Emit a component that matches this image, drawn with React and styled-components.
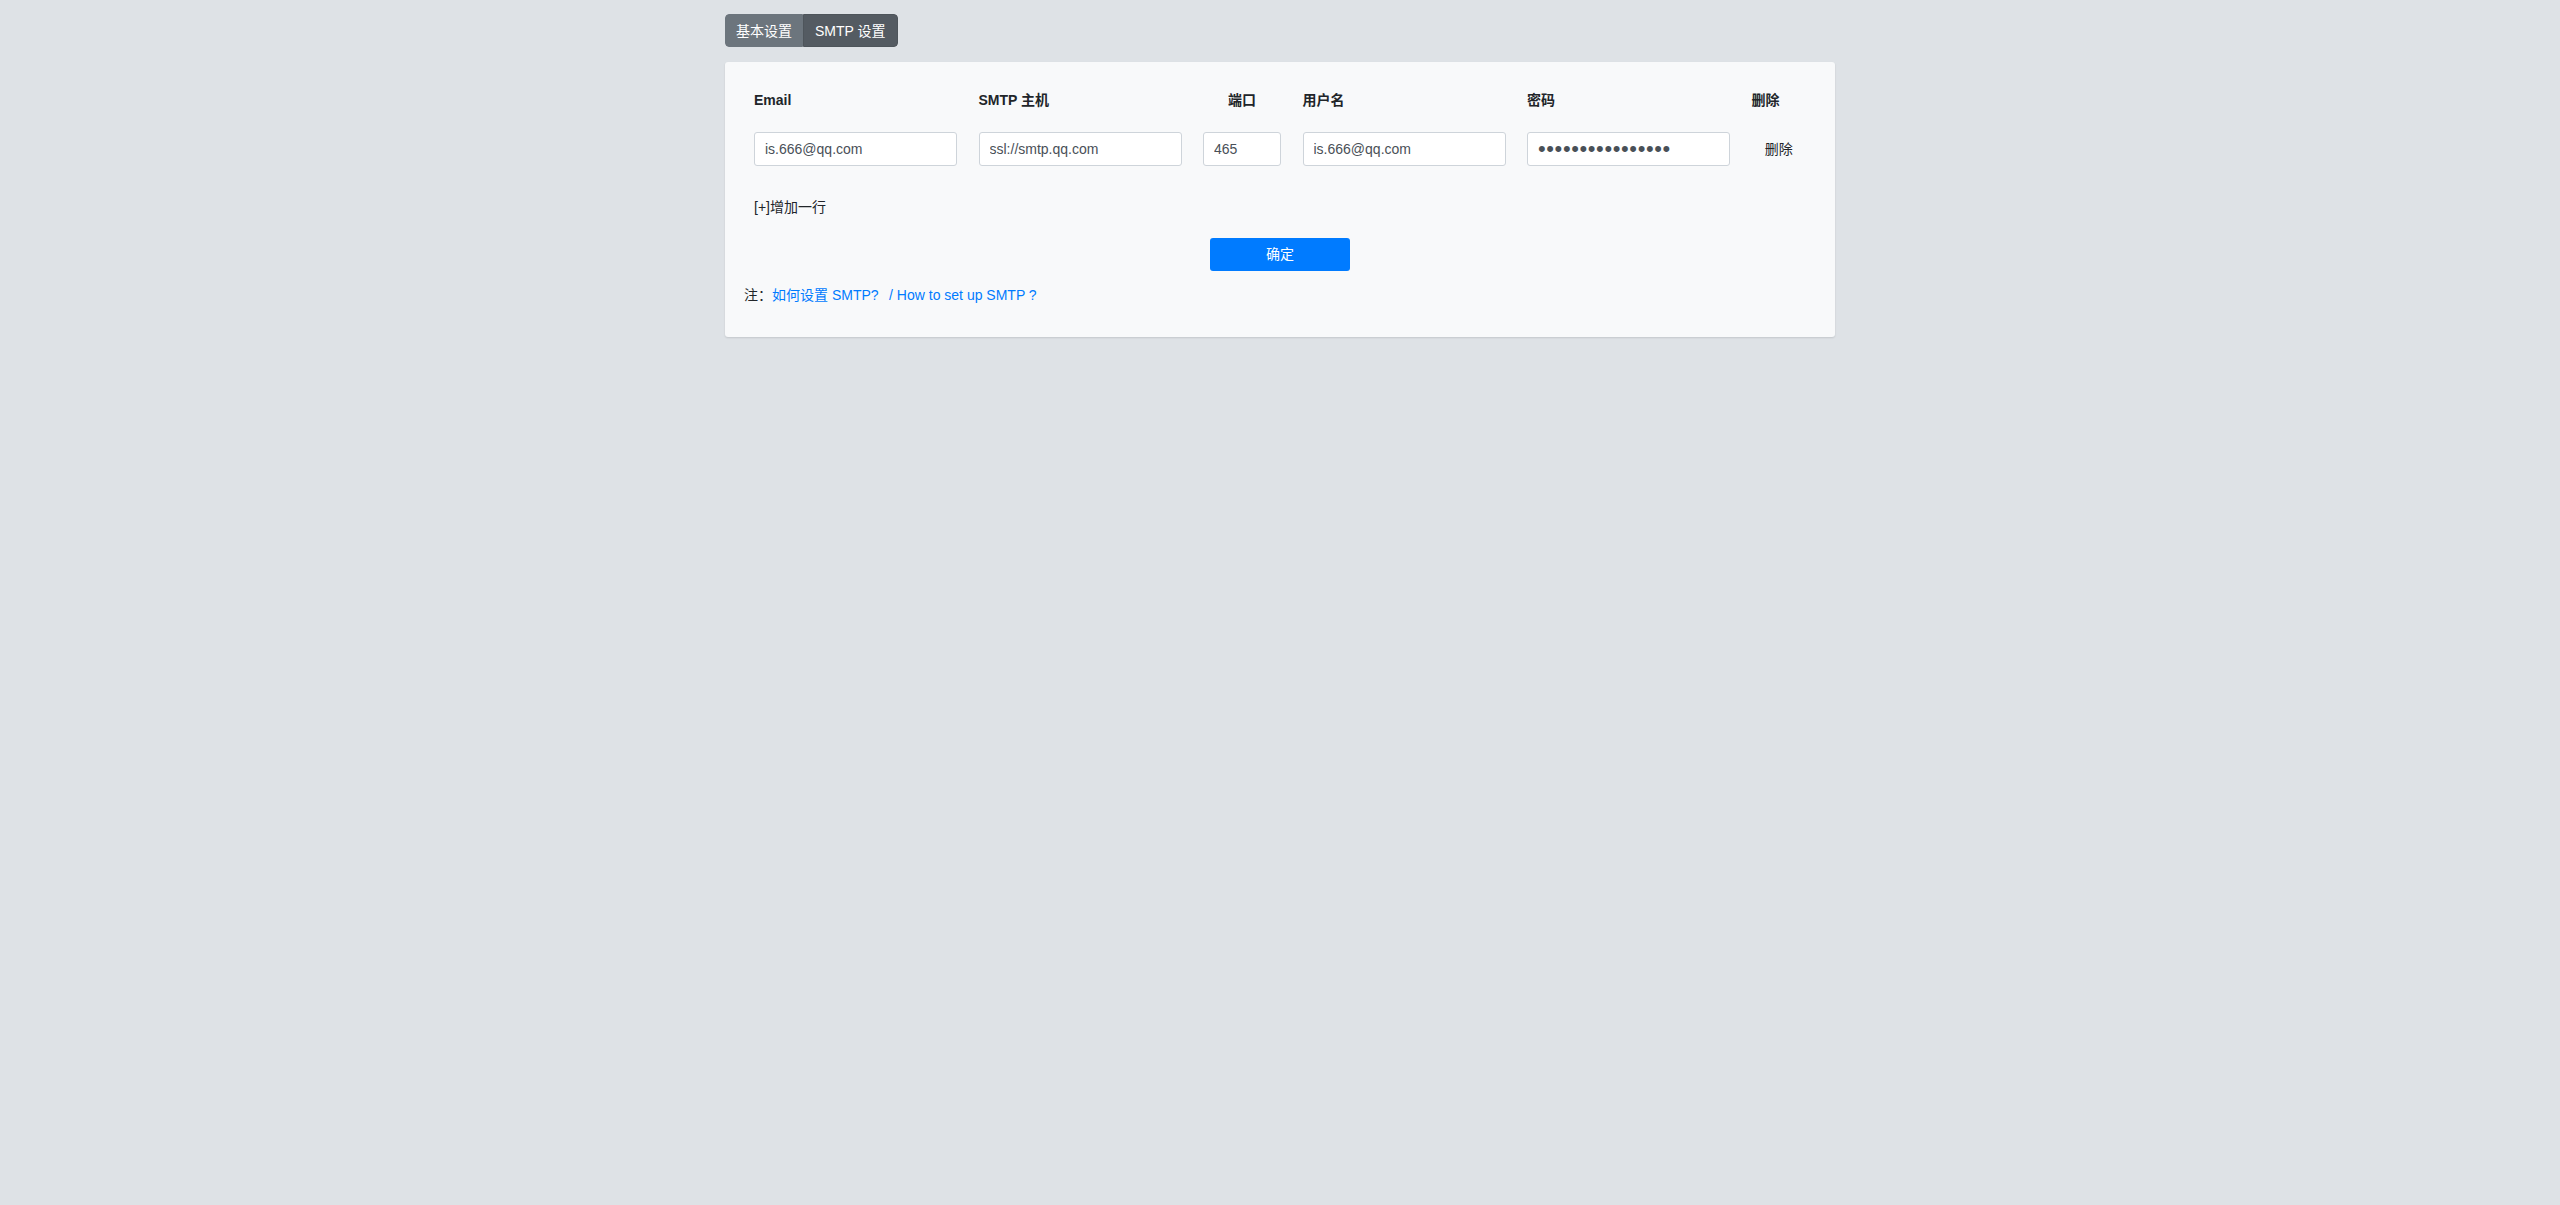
import React from "react";
import styled, { createGlobalStyle } from "styled-components";

const Global = createGlobalStyle`
  html, body { margin: 0; padding: 0; background: #dee2e6; }
  body {
    font-family: "Liberation Sans", Arial, "Noto Sans CJK SC", sans-serif;
    font-size: 14px;
    line-height: 1.5;
    color: #212529;
    min-height: 1205px;
  }
  * { box-sizing: border-box; }
`;

const Container = styled.div`
  width: 1110px;
  margin: 0 auto;
  padding-top: 14px;
  display: flex;
  flex-direction: column;
  align-items: flex-start;
  gap: 15px;
`;

const TabGroup = styled.div`
  display: inline-flex;
  border-radius: 4px;
  overflow: hidden;
`;

const Tab = styled.button`
  height: 33px;
  padding: 0 ${(p) => (p.$active ? 11 : 10)}px;
  border: 1px solid ${(p) => (p.$active ? "#4e555b" : "#6c757d")};
  background: ${(p) => (p.$active ? "#545b62" : "#6c757d")};
  color: #fff;
  font: inherit;
  font-size: 14px;
  line-height: 20px;
  cursor: pointer;
  &:first-child { border-radius: 4px 0 0 4px; }
  &:last-child { border-radius: 0 4px 4px 0; }
`;

const Card = styled.div`
  width: 100%;
  background: #f8f9fa;
  border-radius: 3px;
  box-shadow: 0 1px 2px rgba(0, 0, 0, 0.12);
  padding: 28px 19px 31px;
  display: flex;
  flex-direction: column;
`;

const Grid = styled.div`
  display: grid;
  grid-template-columns: 203px 203px 78px 203px 203px 1fr;
  column-gap: 21.5px;
  row-gap: 21px;
  padding: 0 10px;
  align-items: center;
`;

const Th = styled.div`
  font-weight: bold;
  line-height: 21px;
  text-align: ${(p) => p.$align || "left"};
`;

const Input = styled.input`
  width: 100%;
  height: 34px;
  padding: 0 10px;
  border: 1px solid #ced4da;
  border-radius: 3px;
  background: #fff;
  color: #495057;
  font-family: "Liberation Sans", Arial, sans-serif;
  font-size: 14px;
  outline: none;
`;

const PasswordInput = styled(Input)`
  font-size: 22px;
  letter-spacing: 0.6px;
  padding: 0 8px 0 10px;
  line-height: 32px;
`;

const DeleteCell = styled.div`
  text-align: center;
  cursor: pointer;
  line-height: 21px;
  color: #212529;
`;

const AddRow = styled.div`
  padding: 0 10px;
  margin-top: 31px;
  line-height: 21px;
  cursor: pointer;
`;

const SubmitRow = styled.div`
  display: flex;
  justify-content: center;
  margin-top: 20px;
`;

const SubmitButton = styled.button`
  width: 140px;
  height: 33px;
  border: none;
  border-radius: 3px;
  background: #007bff;
  color: #fff;
  font: inherit;
  font-size: 14px;
  cursor: pointer;
`;

const Note = styled.div`
  margin-top: 14px;
  line-height: 21px;
`;

const Link = styled.a`
  color: #007bff;
  text-decoration: none;
  margin-left: ${(p) => p.$gap || 0}px;
`;

export default function App() {
  return (
    <>
      <Global />
      <Container>
        <TabGroup>
          <Tab>基本设置</Tab>
          <Tab $active>SMTP 设置</Tab>
        </TabGroup>
        <Card>
          <Grid>
            <Th>Email</Th>
            <Th>SMTP 主机</Th>
            <Th $align="center">端口</Th>
            <Th>用户名</Th>
            <Th>密码</Th>
            <Th>删除</Th>

            <Input defaultValue="is.666@qq.com" />
            <Input defaultValue="ssl://smtp.qq.com" />
            <Input defaultValue="465" />
            <Input defaultValue="is.666@qq.com" />
            <PasswordInput type="password" defaultValue="abcdefghijklmnop" />
            <DeleteCell>删除</DeleteCell>
          </Grid>
          <AddRow>[+]增加一行</AddRow>
          <SubmitRow>
            <SubmitButton>确定</SubmitButton>
          </SubmitRow>
          <Note>
            注：<Link href="#">如何设置 SMTP?</Link>
            <Link href="#" $gap={10.5}>/ How to set up SMTP ?</Link>
          </Note>
        </Card>
      </Container>
    </>
  );
}
